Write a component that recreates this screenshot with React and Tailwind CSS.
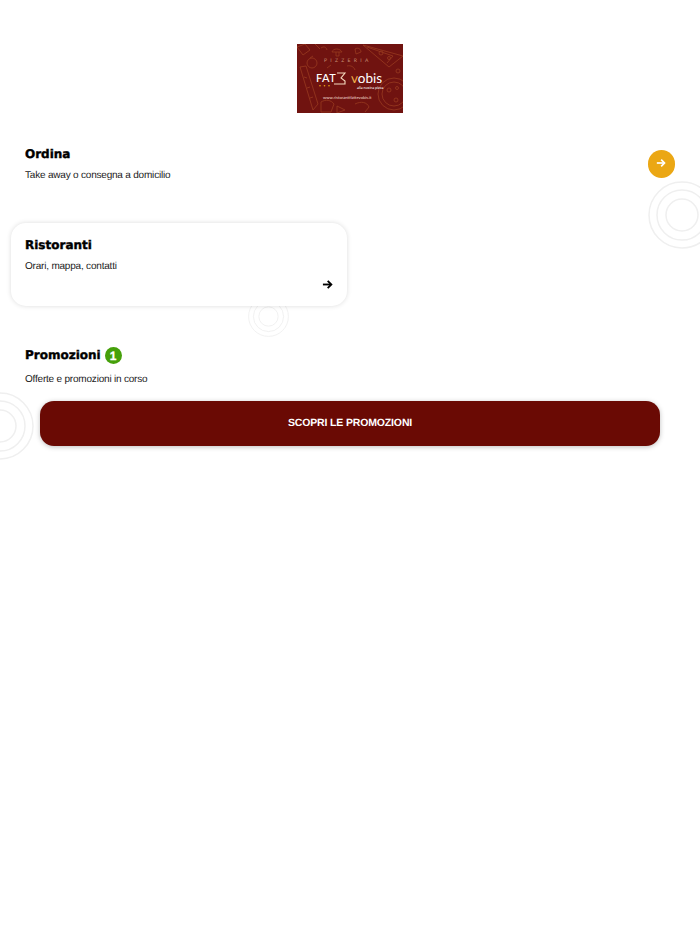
import React from "react";

const Rings = ({ className, stroke = "#efefef" }) => (
  <svg className={className} viewBox="0 0 68 68" fill="none" stroke={stroke} strokeWidth="1.5">
    <circle cx="34" cy="34" r="33" />
    <circle cx="34" cy="34" r="25" />
    <circle cx="34" cy="34" r="16" />
  </svg>
);

const Arrow = ({ className }) => (
  <svg className={className} viewBox="0 0 12 12" fill="none" stroke="currentColor" strokeWidth="2">
    <path d="M1 6h9" />
    <path d="M6.2 2 10.2 6 6.2 10" />
  </svg>
);

const Logo = () => (
  <svg className="block w-[106px] h-[69px]" viewBox="0 0 106 69">
    <rect width="106" height="69" fill="#701310" />
    <g fill="none" stroke="#983a20" strokeWidth="0.8">
      <path d="M0 3 8 0 13 6 6 11Z" />
      <circle cx="15" cy="19" r="5" />
      <path d="M13 14l3-2" />
      <path d="M3 23 16 66 21 60 9 22Z" />
      <path d="M7 33l3 1M10 44l3-1M13 54l3-1" />
      <path d="M35 8c1-4 8-4 10 0ZM39 8v4h3V8" />
      <path d="M66 1 106 12 92 23Z" />
      <path d="M70 3l26 9-6 7" />
      <circle cx="84" cy="9" r="2" />
      <circle cx="92" cy="14" r="1.5" />
      <circle cx="97" cy="50" r="16" />
      <circle cx="97" cy="50" r="12" />
      <circle cx="92" cy="46" r="2" />
      <circle cx="99" cy="56" r="2" />
      <circle cx="100" cy="44" r="1.5" />
      <circle cx="101" cy="27" r="2" />
      <path d="M24 58c5-3 10-2 13 2l-3 8H24Z" />
      <path d="M58 5c3-2 6 0 6 3l-5 2Z" />
      <path d="M58 60c6-3 12-2 14 3l-4 5" />
      <path d="M40 62l8 4-8 3Z" />
      <path d="M24 4c3-2 5-1 6 2M50 22c4-1 7 1 8 4M30 24l4-3M18 0l5 5" />
    </g>
    <text x="27" y="18" fontSize="5" letterSpacing="3.3" fill="#c68f73" fontFamily="Lato, sans-serif">PIZZERIA</text>
    <text x="19" y="38" fontSize="11" letterSpacing="0.5" fontWeight="500" fill="#ffffff" fontFamily="Lato, sans-serif">FAT</text>
    <path d="M40 29h8l-4 5 4 3v3H37" fill="none" stroke="#f6dcc0" strokeWidth="1.1" />
    <circle cx="23" cy="41.7" r="0.8" fill="#eaa616" />
    <circle cx="27.5" cy="41.7" r="0.8" fill="#eaa616" />
    <circle cx="32" cy="41.7" r="0.8" fill="#eaa616" />
    <text x="54" y="39" fontSize="13.5" fill="#ffffff" fontFamily="Lato, sans-serif">
      <tspan fill="#eeb04a">v</tspan>obis
    </text>
    <text x="60" y="44.5" fontSize="3.8" fill="#ffffff" fontFamily="Lato, sans-serif">alla nostra pizza</text>
    <text x="26" y="54.5" fontSize="4.15" fill="#f0dcd0" fontFamily="Lato, sans-serif">www.ristorantifattevobis.it</text>
  </svg>
);

const App = () => {
  return (
    <div className="relative min-h-[934px] bg-white overflow-hidden font-['Liberation_Sans',sans-serif] text-[#111] [text-rendering:geometricPrecision]">
      <Rings className="absolute left-[648px] top-[181px] w-[68px] h-[68px]" />
      <Rings className="absolute left-[248px] top-[296px] w-[41px] h-[41px]" stroke="#f0f0f0" />
      <Rings className="absolute -left-[34px] top-[392px] w-[68px] h-[68px]" />

      <div className="relative flex justify-center pt-[44px]">
        <Logo />
      </div>

      <div className="relative flex justify-between items-start mt-[27px] px-[25px]">
        <div>
          <h2 className="font-['DejaVu_Sans',sans-serif] font-bold text-[12px] [-webkit-text-stroke:0.4px_black] leading-[29px] text-black">Ordina</h2>
          <p className="text-[10px] tracking-[-0.2px] leading-[13px] text-[#222]">Take away o consegna a domicilio</p>
        </div>
        <div className="flex items-center justify-center w-[27.5px] h-[27.5px] mt-[10px] rounded-full bg-[#eba714] text-white">
          <Arrow className="w-[10px] h-[10px] -mt-[1px]" />
        </div>
      </div>

      <div className="relative w-[336px] h-[83px] mt-[41px] ml-[11px] rounded-[15px] bg-white shadow-[0_0_5px_rgba(0,0,0,0.14)] px-[14px] pt-[8px]">
        <h2 className="font-['DejaVu_Sans',sans-serif] font-bold text-[12px] [-webkit-text-stroke:0.4px_black] leading-[29px] text-black">Ristoranti</h2>
        <p className="text-[10px] tracking-[-0.2px] leading-[13px] text-[#222]">Orari, mappa, contatti</p>
        <div className="flex justify-end mt-[6px] text-black">
          <Arrow className="w-[11px] h-[11px]" />
        </div>
      </div>

      <div className="relative mt-[35px] pl-[25px]">
        <div className="flex items-center h-[29px]">
          <h2 className="font-['DejaVu_Sans',sans-serif] font-bold text-[12px] [-webkit-text-stroke:0.4px_black] leading-[29px] text-black">Promozioni</h2>
          <span className="flex items-center justify-center w-[17px] h-[17px] ml-[4px] rounded-full bg-[#45a00a] text-white text-[12px] font-bold [-webkit-text-stroke:0.3px_white]">1</span>
        </div>
        <p className="text-[10px] tracking-[-0.2px] leading-[13px] mt-[3px] text-[#222]">Offerte e promozioni in corso</p>
      </div>

      <div className="relative flex items-center justify-center h-[45px] pt-[1px] mx-[40px] mt-[15px] rounded-[14px] bg-[#6a0a04] shadow-[0_1px_5px_rgba(0,0,0,0.25)] text-white text-[10.5px] tracking-[-0.15px] font-bold">
        SCOPRI LE PROMOZIONI
      </div>
    </div>
  );
};

export default App;
